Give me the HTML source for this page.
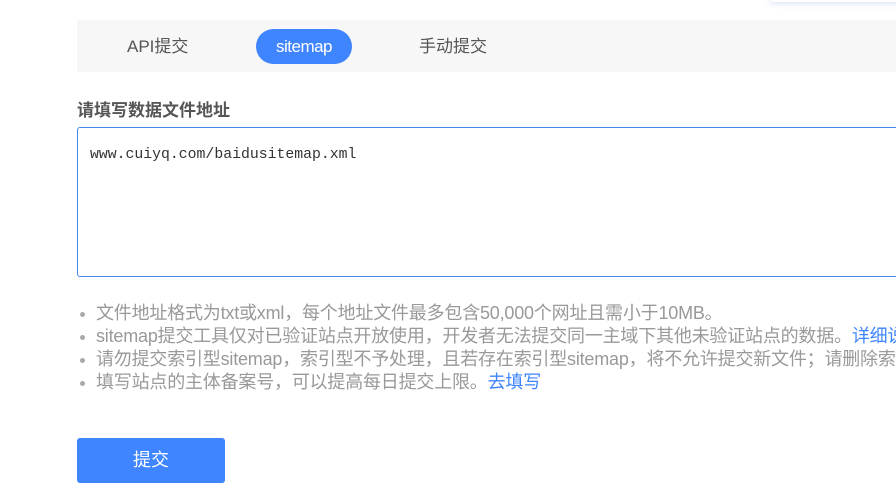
<!DOCTYPE html>
<html><head><meta charset="utf-8"><style>
html{overflow:hidden}
body{margin:0;width:896px;height:501px;overflow:hidden;background:#fff;font-family:"Liberation Sans","Noto Sans CJK SC",sans-serif;position:relative}
.abs{position:absolute;white-space:nowrap}
.clip{position:absolute;left:0;top:0;width:896px;height:501px;overflow:hidden}
.tabs{left:77px;top:20px;width:819px;height:52px;background:#f7f7f7}
.tab{font-size:17px;color:#555;top:35px;line-height:24px}
.pill{left:256px;top:29px;width:96px;height:35px;border-radius:18px;background:#3f85ff;color:#fff;font-size:17px;line-height:35px;text-align:center;letter-spacing:-0.5px}
.label{left:77px;top:99px;font-size:17px;font-weight:bold;color:#555;line-height:24px}
.ta{left:77px;top:127px;width:830px;height:148px;border:1px solid #4a86f0;border-radius:3px}
.mono{left:90px;top:147px;font-family:"Liberation Mono",monospace;font-size:14.8px;color:#333}
ul{position:absolute;left:77px;top:302px;margin:0;padding:0;list-style:none;font-size:18px;color:#999;line-height:23px;white-space:nowrap;letter-spacing:-0.2px}
li{padding-left:19px;position:relative}
li:before{content:"";position:absolute;left:3px;top:10px;width:5px;height:5px;border-radius:50%;background:#aaa}
a{color:#3f85ff;text-decoration:none}
.btn{left:77px;top:438px;width:148px;height:45px;background:#3f85ff;border-radius:3px;color:#fff;font-size:18px;line-height:45px;text-align:center}
.sh{left:770px;top:-6px;width:140px;height:8px;box-shadow:0 2px 6px rgba(120,150,220,.25);border-radius:4px;background:#fff}
</style></head><body><div class="clip">
<div class="abs sh"></div>
<div class="abs tabs"></div>
<div class="abs tab" style="left:127px">API提交</div>
<div class="abs pill">sitemap</div>
<div class="abs tab" style="left:419px">手动提交</div>
<div class="abs label">请填写数据文件地址</div>
<div class="abs ta"></div>
<div class="abs mono">www.cuiyq.com/baidusitemap.xml</div>
<ul>
<li>文件地址格式为txt或xml，每个地址文件最多包含50,000个网址且需小于10MB。</li>
<li>sitemap提交工具仅对已验证站点开放使用，开发者无法提交同一主域下其他未验证站点的数据。<a>详细说明</a></li>
<li>请勿提交索引型sitemap，索引型不予处理，且若存在索引型sitemap，将不允许提交新文件；请删除索引型sitemap</li>
<li>填写站点的主体备案号，可以提高每日提交上限。<a>去填写</a></li>
</ul>
<div class="abs btn">提交</div>
</div></body></html>
